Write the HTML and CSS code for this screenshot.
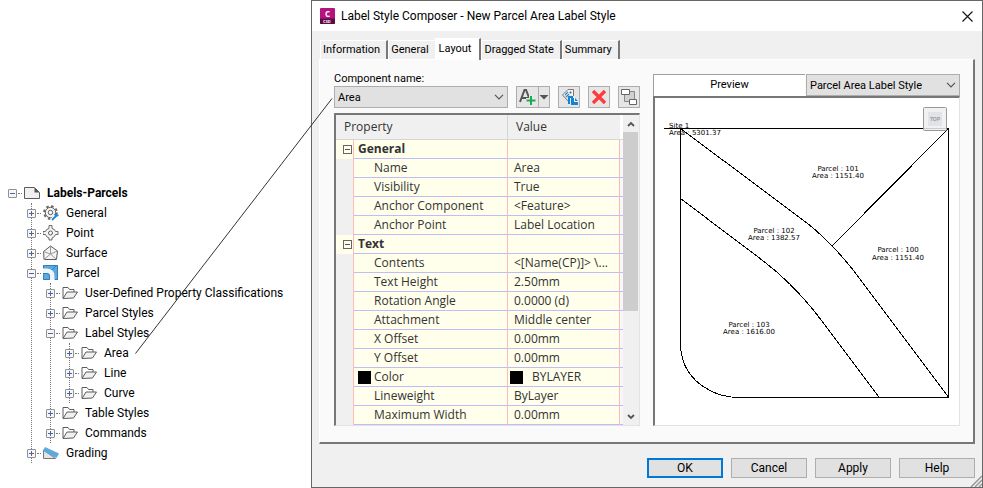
FILE: index.html
```
<!DOCTYPE html>
<html lang="en">
<head>
    <meta charset="UTF-8">
    <title>Label Style Composer</title>
    <link rel="stylesheet" href="styles.css">
</head>
<body>
    <!-- shared icons -->
    <svg class="sprite" width="0" height="0" aria-hidden="true">
        <symbol id="folder" viewBox="0 0 16 14">
            <path d="M1 12V1.500h5l1.500 2H12V6" fill="#fff" stroke="#5c5c5c"/>
            <path d="M1 12.500 5 6h10.500l-4 6z" fill="#f0f0f0" stroke="#5c5c5c"/>
        </symbol>
        <symbol id="chevron" viewBox="0 0 10 6">
            <path d="M1 .8l4 4 4-4" fill="none" stroke="#555" stroke-width="1.200"/>
        </symbol>
    </svg>

    <div class="page">
        <nav class="tree">
            <ul class="root">
                <li>
                    <div class="row"><button class="toggle open" aria-label="Collapse"></button><span class="dash"></span>
                        <svg class="icon" viewBox="0 0 16 16"><path d="M.5 2.500h10l5 5v6H.5z" fill="#f0f0f0" stroke="#5c5c5c"/><path d="M10.500 2.500l5 5h-5z" fill="#555"/></svg>
                        <strong>Labels-Parcels</strong></div>
                    <ul>
                        <li>
                            <div class="row"><button class="toggle" aria-label="Expand"></button><span class="dash"></span>
                                <svg class="icon" viewBox="0 0 16 16"><circle cx="7.500" cy="7.500" r="6.400" fill="none" stroke="#666" stroke-width="1.800" stroke-dasharray="2.500 2.500"/><circle cx="7.500" cy="7.500" r="5.200" fill="#f4f4f4" stroke="#5c5c5c"/><circle cx="7.500" cy="7.500" r="2.200" fill="#fff" stroke="#5c5c5c"/><path d="M9 15l4-4.500" stroke="#fff" stroke-width="4"/><path d="M9 15l4.500-4.500M11.500 9l2 2 2-1" fill="none" stroke="#1e88dc" stroke-width="1.800"/></svg>
                                <span>General</span></div>
                        </li>
                        <li>
                            <div class="row"><button class="toggle" aria-label="Expand"></button><span class="dash"></span>
                                <svg class="icon" viewBox="0 0 16 16"><path d="M6 .5h3v3q3 .5 3.500 3H15v3h-2.500q-.5 2.500-3.500 3.500V15H6v-2Q3 12 2.500 9.500H0v-3h2.500Q3 4 6 3.500z" fill="#f4f4f4" stroke="#6a6a6a"/><circle cx="7.500" cy="8" r="2" fill="#fff" stroke="#5c5c5c"/></svg>
                                <span>Point</span></div>
                        </li>
                        <li>
                            <div class="row"><button class="toggle" aria-label="Expand"></button><span class="dash"></span>
                                <svg class="icon" viewBox="0 0 16 16"><path d="M7.500 1l7 5-1 8.500H1L.6 6.500z" fill="#f4f4f4" stroke="#5c5c5c"/><path d="M7.500 1v8M.6 6.500l6.900 2.500 7-3M1 14.500L7.500 9l6 5.500" fill="none" stroke="#999"/></svg>
                                <span>Surface</span></div>
                        </li>
                        <li>
                            <div class="row"><button class="toggle open" aria-label="Collapse"></button><span class="dash"></span>
                                <svg class="icon" viewBox="0 0 16 16"><path d="M0 0h15v15H0z" fill="#5aa9e0"/><path d="M0 3.500h4Q11.500 4 11.500 11v4H7v-4Q7 8 4 8H0z" fill="#f4f4f4"/><path d="M.5 3V.500h14v14H12M9 5l4-4M0 8.500h4Q6.500 9 6.500 11v3.500H.5z" fill="none" stroke="#2f7fb8"/></svg>
                                <span>Parcel</span></div>
                            <ul>
                                <li><div class="row"><button class="toggle" aria-label="Expand"></button><span class="dash"></span><svg class="icon"><use href="#folder"/></svg><span>User-Defined Property Classifications</span></div></li>
                                <li><div class="row"><button class="toggle" aria-label="Expand"></button><span class="dash"></span><svg class="icon"><use href="#folder"/></svg><span>Parcel Styles</span></div></li>
                                <li>
                                    <div class="row"><button class="toggle open" aria-label="Collapse"></button><span class="dash"></span><svg class="icon"><use href="#folder"/></svg><span>Label Styles</span></div>
                                    <ul>
                                        <li><div class="row"><button class="toggle" aria-label="Expand"></button><span class="dash"></span><svg class="icon"><use href="#folder"/></svg><span>Area</span></div></li>
                                        <li><div class="row"><button class="toggle" aria-label="Expand"></button><span class="dash"></span><svg class="icon"><use href="#folder"/></svg><span>Line</span></div></li>
                                        <li><div class="row"><button class="toggle" aria-label="Expand"></button><span class="dash"></span><svg class="icon"><use href="#folder"/></svg><span>Curve</span></div></li>
                                    </ul>
                                </li>
                                <li><div class="row"><button class="toggle" aria-label="Expand"></button><span class="dash"></span><svg class="icon"><use href="#folder"/></svg><span>Table Styles</span></div></li>
                                <li><div class="row"><button class="toggle" aria-label="Expand"></button><span class="dash"></span><svg class="icon"><use href="#folder"/></svg><span>Commands</span></div></li>
                            </ul>
                        </li>
                        <li>
                            <div class="row"><button class="toggle" aria-label="Expand"></button><span class="dash"></span>
                                <svg class="icon" viewBox="0 0 16 16"><path d="M.5 5v8.500h12z" fill="#e4e4e4" stroke="#777"/><path d="M2 2l14 6.500-2.500 4.500L0 6z" fill="#5aa9e0"/></svg>
                                <span>Grading</span></div>
                        </li>
                    </ul>
                </li>
            </ul>
        </nav>

        <main class="dialog">
            <header class="titlebar">
                <svg width="15" height="16" viewBox="0 0 15 16"><rect width="15" height="16" rx="1" fill="#b5127e"/><path d="M0 10.500h15V15a1 1 0 0 1-1 1H1a1 1 0 0 1-1-1z" fill="#5c0a45"/><text x="5" y="9" class="logo-big">C</text><text x="3" y="15" class="logo-small">C3D</text></svg>
                <h1>Label Style Composer - New Parcel Area Label Style</h1>
                <button class="close" aria-label="Close"><svg width="11" height="11" viewBox="0 0 11 11"><path d="M.5.500l10 10M10.500.500l-10 10" stroke="#111" stroke-width="1.100"/></svg></button>
            </header>

            <div class="tabs" role="tablist">
                <button role="tab">Information</button>
                <button role="tab" class="before-active">General</button>
                <button role="tab" class="active" aria-selected="true">Layout</button>
                <button role="tab">Dragged State</button>
                <button role="tab">Summary</button>
            </div>

            <section class="panel">
                <div class="left">
                    <label class="caption" for="component">Component name:</label>
                    <div class="toolbar">
                        <div class="combo">
                            <select id="component"><option>Area</option></select>
                            <svg class="arrow"><use href="#chevron"/></svg>
                        </div>
                        <button class="tool split" aria-label="Create text component">
                            <svg width="32" height="20" viewBox="0 0 32 20"><path d="M3 15L7.500 3h1.500l4 10M4.500 11h7" fill="none" stroke="#555" stroke-width="2"/><path d="M14 8v10M9 13h10" stroke="#e6e6e6" stroke-width="4"/><path d="M14 9v9M9.500 13.500h9" stroke="#1faa4d" stroke-width="2"/><path d="M21.500 0v20" stroke="#adadad"/><path d="M22.500 8h9L27 12.500z" fill="#555"/></svg>
                        </button>
                        <button class="tool" aria-label="Copy component">
                            <svg width="20" height="20" viewBox="0 0 20 20"><path d="M3.500 8L9 2.500h5.500V9M3.500 8l6 6.500" fill="#f4f4f4" stroke="#777"/><circle cx="11.500" cy="5.500" r="1" fill="#555"/><path d="M6 8l3-3M7 10l3-3M9 11l2-2" stroke="#2d8bd0" stroke-width="1.200"/><path d="M9 9h5v2h-3v6H9zM12 11h4l3 3v4h-7z" fill="#1583d3"/><path d="M15.500 11v3.500H19" fill="none" stroke="#fff"/></svg>
                        </button>
                        <button class="tool" aria-label="Delete component">
                            <svg width="20" height="20" viewBox="0 0 20 20"><path d="M4 4l12 12M16 4L4 16" stroke="#ff3b3b" stroke-width="3.400"/></svg>
                        </button>
                        <button class="tool" aria-label="Component draw order">
                            <svg width="20" height="20" viewBox="0 0 20 20"><path d="M5.500 4.500h10v10h-10z" fill="#d0d0d0" stroke="#888"/><path d="M2.500 2.500h8v5h-8zM10.500 12.500h7v5h-7z" fill="#fff" stroke="#666"/></svg>
                        </button>
                    </div>

                    <div class="grid">
                        <table>
                            <thead>
                                <tr><th colspan="2">Property</th><th>Value</th><th class="end"></th></tr>
                            </thead>
                            <tbody>
                                <tr class="group"><td><button class="box" aria-label="Collapse General"></button></td><th>General</th><td></td><td></td></tr>
                                <tr><td></td><td>Name</td><td>Area</td><td></td></tr>
                                <tr><td></td><td>Visibility</td><td>True</td><td></td></tr>
                                <tr><td></td><td>Anchor Component</td><td>&lt;Feature&gt;</td><td></td></tr>
                                <tr><td></td><td>Anchor Point</td><td>Label Location</td><td></td></tr>
                                <tr class="group"><td><button class="box" aria-label="Collapse Text"></button></td><th>Text</th><td></td><td></td></tr>
                                <tr><td></td><td>Contents</td><td>&lt;[Name(CP)]&gt; \...</td><td></td></tr>
                                <tr><td></td><td>Text Height</td><td>2.50mm</td><td></td></tr>
                                <tr><td></td><td>Rotation Angle</td><td>0.0000 (d)</td><td></td></tr>
                                <tr><td></td><td>Attachment</td><td>Middle center</td><td></td></tr>
                                <tr><td></td><td>X Offset</td><td>0.00mm</td><td></td></tr>
                                <tr><td></td><td>Y Offset</td><td>0.00mm</td><td></td></tr>
                                <tr class="color"><td></td><td><div><i class="swatch"></i>Color</div></td><td><div><i class="swatch"></i>BYLAYER</div></td><td></td></tr>
                                <tr><td></td><td>Lineweight</td><td>ByLayer</td><td></td></tr>
                                <tr><td></td><td>Maximum Width</td><td>0.00mm</td><td></td></tr>
                            </tbody>
                        </table>
                        <div class="scrollbar">
                            <button aria-label="Scroll up"><svg width="8" height="6" viewBox="0 0 8 6"><path d="M1 5l3-3 3 3" fill="none" stroke="#555" stroke-width="1.800"/></svg></button>
                            <div class="track"><div class="thumb"></div></div>
                            <button aria-label="Scroll down"><svg width="8" height="6" viewBox="0 0 8 6"><path d="M1 1l3 3 3-3" fill="none" stroke="#555" stroke-width="1.800"/></svg></button>
                        </div>
                    </div>
                </div>

                <div class="right">
                    <div class="preview-head">
                        <label for="style">Preview</label>
                        <div class="combo">
                            <select id="style"><option>Parcel Area Label Style</option></select>
                            <svg class="arrow"><use href="#chevron"/></svg>
                        </div>
                    </div>
                    <div class="canvas">
                        <svg viewBox="655 98 304 326" preserveAspectRatio="xMinYMin meet">
                            <g fill="none" stroke="#000" shape-rendering="crispEdges">
                                <path d="M664 128.500H948.500V397.500H737Q722 397 709 390Q681 375 680.500 344V128.500"/>
                                <path d="M680.500 128.500L807 223Q837 247 863 283L948.500 397M948.500 128.500L832 246"/>
                                <path d="M680.500 198.500L762 260Q791 282 815 312L879 397"/>
                            </g>
                            <g class="parcel-text">
                                <text x="669" y="128">Site 1</text>
                                <text x="669" y="135">Area : 5301.37</text>
                            </g>
                            <g class="parcel-text middle">
                                <text x="838" y="171">Parcel : 101</text>
                                <text x="838" y="178">Area : 1151.40</text>
                                <text x="774" y="233">Parcel : 102</text>
                                <text x="774" y="240">Area : 1382.57</text>
                                <text x="898" y="252">Parcel : 100</text>
                                <text x="898" y="260">Area : 1151.40</text>
                                <text x="749" y="327">Parcel : 103</text>
                                <text x="749" y="334">Area : 1616.00</text>
                            </g>
                            <rect x="923.500" y="107.500" width="23" height="23" rx="1" fill="#efefef" fill-opacity=".85" stroke="#999"/>
                            <rect x="928" y="112" width="14" height="14" fill="#e2e3e8"/>
                            <text x="935" y="121" class="cube">TOP</text>
                        </svg>
                    </div>
                </div>
            </section>

            <footer class="actions">
                <button class="default">OK</button>
                <button>Cancel</button>
                <button>Apply</button>
                <button>Help</button>
                <svg class="grip" width="12" height="12" viewBox="0 0 12 12"><path d="M1 12L12 1M5 12l7-7M9 12l3-3" stroke="#999" stroke-width="1.500"/></svg>
            </footer>
        </main>

        <!-- callout from the Area node to the component list -->
        <svg class="callout" width="200" height="256" viewBox="0 0 200 256"><path d="M.5 255.500L197 .5" stroke="#333"/></svg>
    </div>
</body>
</html>
```
FILE: styles.css
```
* {
    box-sizing: border-box;
}

body {
    margin: 0;
    background-color: #fff;
    color: #000;
    font-family: Roboto, "Open Sans", sans-serif;
    font-size: 12px;
}

button,
select {
    font-family: inherit;
    font-size: 12px;
    color: #000;
    margin: 0;
    padding: 0;
}

.sprite {
    position: absolute;
}

.page {
    position: relative;
    display: grid;
    grid-template-columns: 311px 1fr;
    min-height: 100vh;
}

/* tree */
.tree {
    padding: 183px 0 0 8px;
}

.tree ul {
    list-style: none;
    margin: 0 0 0 23px;
    padding: 0;
    border-left: 1px dotted #777;
}

.tree ul.root {
    margin: 0;
    border: none;
}

.tree ul ul > li {
    margin-left: -5px;
}

.row {
    display: flex;
    align-items: center;
    height: 20px;
    white-space: nowrap;
}

.toggle {
    width: 9px;
    height: 9px;
    border: 1px solid #919191;
    border-radius: 1px;
    background: linear-gradient(#4b63a7, #4b63a7) center / 5px 1px no-repeat,
                linear-gradient(#4b63a7, #4b63a7) center / 1px 5px no-repeat, #f6f6f6;
}

.toggle.open {
    background: linear-gradient(#4b63a7, #4b63a7) center / 5px 1px no-repeat, #f6f6f6;
}

.dash {
    width: 4px;
    margin: 0 2px 0 1px;
    border-top: 1px dotted #777;
}

.icon {
    width: 16px;
    height: 16px;
    margin-right: 7px;
    flex: none;
}

/* dialog */
.dialog {
    display: flex;
    flex-direction: column;
    border: 1px solid #666;
    background-color: #f0f0f0;
}

.titlebar {
    display: flex;
    align-items: center;
    height: 30px;
    padding: 0 9px 0 8px;
    background-color: #fff;
}

.titlebar h1 {
    flex: 1;
    margin: 0 0 0 6px;
    font-size: 12px;
    font-weight: normal;
}

.close {
    display: flex;
    border: none;
    background: none;
}

.logo-big {
    font: bold 8px "Open Sans", sans-serif;
    fill: #fff;
}

.logo-small {
    font: bold 4px "Open Sans", sans-serif;
    fill: #fff;
}

.tabs {
    display: flex;
    align-items: flex-end;
    height: 28px;
    padding-left: 8px;
}

.tabs button {
    height: 19px;
    padding: 0 6px 2px 2px;
    border: none;
    border-top: 1px solid #fff;
    border-left: 1px solid #fff;
    border-right: 2px solid #777;
    background-color: #f0f0f0;
    font-size: 11px;
    white-space: nowrap;
}

.tabs .before-active {
    border-right: none;
}

.tabs button.active {
    z-index: 1;
    height: 22px;
    margin-bottom: -1px;
    padding: 0 8px 3px 3px;
    background-color: #fff;
}

.panel {
    flex: 1;
    display: grid;
    grid-template-columns: 306px 1fr;
    gap: 13px;
    margin: 0 7px;
    padding: 12px 13px 16px 14px;
    border: 1px solid #fff;
    border-right: 2px solid #777;
    border-bottom: 2px solid #777;
    background-color: #fafafa;
}

.left,
.right {
    display: flex;
    flex-direction: column;
}

.caption {
    height: 14px;
    font-size: 11px;
    line-height: 14px;
}

.toolbar {
    display: flex;
    gap: 8px;
    height: 22px;
}

.combo {
    position: relative;
    display: flex;
    height: 22px;
}

.toolbar .combo {
    flex: 1;
}

.combo select {
    width: 100%;
    height: 22px;
    padding-left: 3px;
    border: 1px solid #adadad;
    border-radius: 0;
    background-color: #e1e1e1;
    font-size: 11px;
    appearance: none;
}

.arrow {
    position: absolute;
    right: 4px;
    top: 8px;
    width: 10px;
    height: 6px;
    pointer-events: none;
}

.tool {
    display: flex;
    width: 22px;
    height: 22px;
    border: 1px solid #adadad;
    background-color: #e6e6e6;
}

.tool.split {
    width: 34px;
}

/* property grid */
.grid {
    flex: 1;
    display: flex;
    margin-top: 5px;
    border: 1px solid #e3e3e3;
    border-top: 2px solid #777;
    border-left: 2px solid #777;
    background-color: #f0f0f0;
    color: #333;
    font-family: "Open Sans", sans-serif;
}

table {
    flex: 1;
    align-self: flex-start;
    table-layout: fixed;
    border-spacing: 0;
    font-size: 12px;
}

th,
td {
    padding: 0;
    height: 19px;
    line-height: 18px;
    text-align: left;
    white-space: nowrap;
}

thead th {
    height: 25px;
    padding-left: 8px;
    border-right: 1px solid #d5d5d5;
    border-bottom: 1px solid #d5d5d5;
    background-color: #f0f0f0;
    font-weight: normal;
}

thead th:nth-child(2) {
    padding-left: 8px;
    border-right: none;
}

thead .end {
    width: 3px;
    padding: 0;
    border-right: none;
    background-color: #fff;
}

tbody tr > * {
    border-bottom: 1px solid #bdbdf8;
    border-right: 1px solid #ffb9b9;
    background-color: #ffffec;
}

tbody tr > :nth-child(1) {
    width: 18px;
    border-bottom: none;
    background-color: #f0f0f0;
}

tbody tr > :nth-child(2) {
    width: 154px;
    padding-left: 20px;
}

tbody tr > :nth-child(3) {
    padding-left: 6px;
}

tbody tr > :nth-child(4) {
    width: 3px;
    border-right: none;
    background-color: #f7f7f7;
}

tbody .group > td:nth-child(1) {
    background-color: #ffffec;
    line-height: 0;
}

tbody .group > th:nth-child(2) {
    padding-left: 4px;
}

.box {
    width: 9px;
    height: 9px;
    margin-left: 7px;
    border: 1px solid #666;
    background: linear-gradient(#555, #555) center / 5px 1px no-repeat;
}

.color div {
    display: flex;
    align-items: center;
    gap: 3px;
    height: 18px;
}

tbody .color > :nth-child(2) {
    padding-left: 4px;
}

tbody .color > :nth-child(3) {
    padding-left: 2px;
}

.color td:nth-child(3) div {
    gap: 9px;
}

.swatch {
    width: 13px;
    height: 13px;
    background-color: #000;
}

.scrollbar {
    display: flex;
    flex-direction: column;
    width: 16px;
    background-color: #f0f0f0;
}

.scrollbar button {
    display: flex;
    align-items: center;
    justify-content: center;
    height: 17px;
    border: none;
    background: none;
}

.track {
    flex: 1;
}

.thumb {
    width: 15px;
    height: 65%;
    background-color: #cdcdcd;
}

/* preview */
.preview-head {
    display: flex;
    gap: 1px;
    margin-top: 2px;
}

.preview-head label {
    flex: 1;
    border-top: 1px solid #a0a0a0;
    border-left: 1px solid #a0a0a0;
    background-color: #fff;
    font-size: 11px;
    line-height: 20px;
    text-align: center;
}

.preview-head .combo {
    width: 154px;
}

.canvas {
    flex: 1;
    border: 1px solid #e3e3e3;
    border-top: 2px solid #777;
    border-left: 2px solid #777;
    background-color: #fff;
}

.canvas svg {
    display: block;
    width: 100%;
}

.parcel-text {
    font: 7px "DejaVu Sans", sans-serif;
}

.middle {
    text-anchor: middle;
}

.cube {
    font: bold 5px "Liberation Sans", sans-serif;
    fill: #999;
    text-anchor: middle;
}

/* buttons */
.actions {
    position: relative;
    display: flex;
    justify-content: flex-end;
    gap: 8px;
    padding: 14px 7px 9px;
}

.actions button {
    width: 76px;
    height: 20px;
    border: 1px solid #adadad;
    background-color: #e1e1e1;
}

.actions .default {
    border: 2px solid #0078d7;
}

.grip {
    position: absolute;
    right: 0;
    bottom: 0;
}

/* callout line lies over the tree and the dialog */
.callout {
    position: absolute;
    left: 135px;
    top: 98px;
    pointer-events: none;
}
```
